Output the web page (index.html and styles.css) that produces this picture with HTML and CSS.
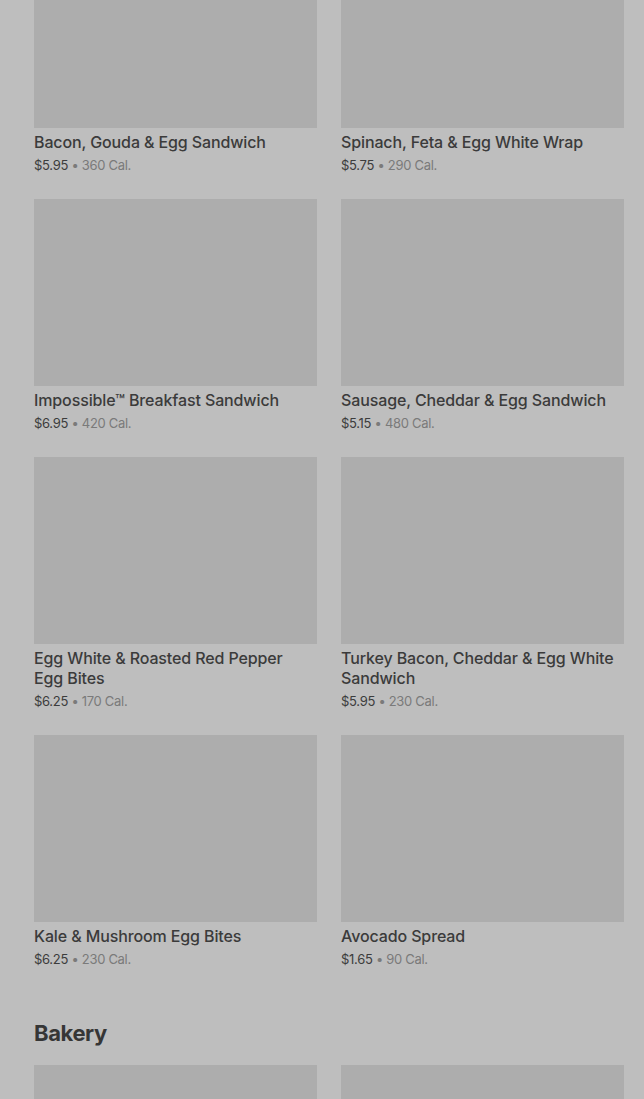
FILE: index.html
```html
<!DOCTYPE html>
<html lang="en">
<head>
<meta charset="utf-8">
<title>Menu</title>
<link rel="stylesheet" href="styles.css">
</head>
<body>
<main class="menu">
  <section class="category category--scrolled">
    <div class="grid">
      <article class="item">
        <div class="thumb"></div>
        <h3 class="name">Bacon, Gouda &amp; Egg Sandwich</h3>
        <p class="meta"><span class="price">$5.95</span> <span class="cal">• 360 Cal.</span></p>
      </article>
      <article class="item">
        <div class="thumb"></div>
        <h3 class="name">Spinach, Feta &amp; Egg White Wrap</h3>
        <p class="meta"><span class="price">$5.75</span> <span class="cal">• 290 Cal.</span></p>
      </article>
      <article class="item">
        <div class="thumb"></div>
        <h3 class="name">Impossible™ Breakfast Sandwich</h3>
        <p class="meta"><span class="price">$6.95</span> <span class="cal">• 420 Cal.</span></p>
      </article>
      <article class="item">
        <div class="thumb"></div>
        <h3 class="name">Sausage, Cheddar &amp; Egg Sandwich</h3>
        <p class="meta"><span class="price">$5.15</span> <span class="cal">• 480 Cal.</span></p>
      </article>
      <article class="item">
        <div class="thumb"></div>
        <h3 class="name">Egg White &amp; Roasted Red Pepper Egg Bites</h3>
        <p class="meta"><span class="price">$6.25</span> <span class="cal">• 170 Cal.</span></p>
      </article>
      <article class="item">
        <div class="thumb"></div>
        <h3 class="name">Turkey Bacon, Cheddar &amp; Egg White Sandwich</h3>
        <p class="meta"><span class="price">$5.95</span> <span class="cal">• 230 Cal.</span></p>
      </article>
      <article class="item">
        <div class="thumb"></div>
        <h3 class="name">Kale &amp; Mushroom Egg Bites</h3>
        <p class="meta"><span class="price">$6.25</span> <span class="cal">• 230 Cal.</span></p>
      </article>
      <article class="item">
        <div class="thumb"></div>
        <h3 class="name">Avocado Spread</h3>
        <p class="meta"><span class="price">$1.65</span> <span class="cal">• 90 Cal.</span></p>
      </article>
    </div>
  </section>
  <section class="category">
    <h2 class="category-title">Bakery</h2>
    <div class="grid">
      <article class="item">
        <div class="thumb"></div>
      </article>
      <article class="item">
        <div class="thumb"></div>
      </article>
    </div>
  </section>
</main>
</body>
</html>
```
FILE: styles.css
```css
* { box-sizing: border-box; }
html, body {
  margin: 0;
  padding: 0;
  background: #bebebe;
  height: 100%;
  overflow: hidden;
}
body {
  font-family: Inter, "Noto Sans", "Liberation Sans", sans-serif;
  color: #3a3a3a;
}
.menu {
  padding: 0 20px 0 34px;
}
.category--scrolled {
  margin-top: -59px;
}
.grid {
  display: grid;
  grid-template-columns: 283px 283px;
  column-gap: 24px;
  row-gap: 25px;
}
.thumb {
  height: 187px;
  background: #adadad;
}
.name {
  margin: 4px 0 0;
  padding-right: 6px;
  font-size: 16px;
  line-height: 20px;
  font-weight: 500;
  color: #3b3b3b;
  letter-spacing: -0.12px;
}
.meta {
  margin: 4px 0 0;
  font-size: 13px;
  line-height: 18px;
  letter-spacing: -0.3px;
}
.price { color: #3c3c3c; }
.cal { color: #7a7a7a; }
.category-title {
  margin: 51px 0 18px;
  font-size: 22px;
  line-height: 28px;
  font-weight: 700;
  color: #363636;
  letter-spacing: -0.4px;
}
```
